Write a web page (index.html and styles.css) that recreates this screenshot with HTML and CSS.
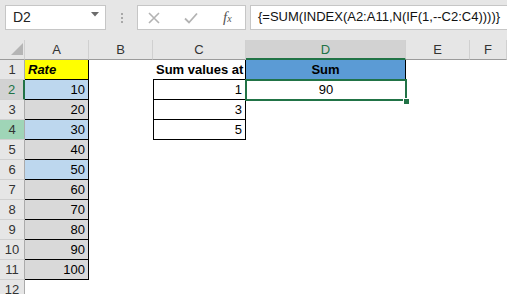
FILE: index.html
```html
<!DOCTYPE html>
<html>
<head>
    <meta charset="utf-8">
    <title>Sum values at</title>
    <link rel="stylesheet" href="styles.css">
</head>
<body>
    <div class="ribbon">
        <div class="name-box">
            <span>D2</span>
            <svg class="drop" width="8" height="5" viewBox="0 0 8 5"><path d="M0 0H8L4 4.5Z" fill="#6b6b6b"/></svg>
        </div>
        <div class="grip"><i></i><i></i><i></i></div>
        <div class="fx-buttons">
            <svg width="12" height="12" viewBox="0 0 12 12"><path d="M1 1L11 11M11 1L1 11" stroke="#b3b3b3" stroke-width="1.6"/></svg>
            <svg width="14" height="12" viewBox="0 0 14 12"><path d="M1 6.5L5 10.5L13 1.5" stroke="#b3b3b3" stroke-width="1.8" fill="none"/></svg>
            <span class="fx">f<sub>x</sub></span>
        </div>
        <div class="formula">{=SUM(INDEX(A2:A11,N(IF(1,--C2:C4))))}</div>
    </div>

    <div class="sheet">
        <!-- column headers -->
        <div class="corner"><svg width="25" height="20" viewBox="0 0 25 20"><path d="M11 15H23V3Z" fill="#b5b5b5"/></svg></div>
        <div class="ch">A</div>
        <div class="ch">B</div>
        <div class="ch">C</div>
        <div class="ch sel">D</div>
        <div class="ch">E</div>
        <div class="ch">F</div>

        <div class="rh">1</div>
        <div class="c a yellow"><b><i>Rate</i></b></div>
        <div class="c"></div>
        <div class="c c1"><b>Sum values at</b></div>
        <div class="c d1"><b>Sum</b></div>
        <div class="c"></div>
        <div class="c"></div>

        <div class="rh sel">2</div>
        <div class="c a blue">10</div>
        <div class="c"></div>
        <div class="c cv">1</div>
        <div class="c active">90</div>
        <div class="c"></div>
        <div class="c"></div>

        <div class="rh">3</div>
        <div class="c a grey">20</div>
        <div class="c"></div>
        <div class="c cv">3</div>
        <div class="c"></div>
        <div class="c"></div>
        <div class="c"></div>

        <div class="rh hl">4</div>
        <div class="c a blue">30</div>
        <div class="c"></div>
        <div class="c cv">5</div>
        <div class="c"></div>
        <div class="c"></div>
        <div class="c"></div>

        <div class="rh">5</div>
        <div class="c a grey">40</div>
        <div class="c"></div><div class="c"></div><div class="c"></div><div class="c"></div><div class="c"></div>

        <div class="rh">6</div>
        <div class="c a blue">50</div>
        <div class="c"></div><div class="c"></div><div class="c"></div><div class="c"></div><div class="c"></div>

        <div class="rh">7</div>
        <div class="c a grey">60</div>
        <div class="c"></div><div class="c"></div><div class="c"></div><div class="c"></div><div class="c"></div>

        <div class="rh">8</div>
        <div class="c a grey">70</div>
        <div class="c"></div><div class="c"></div><div class="c"></div><div class="c"></div><div class="c"></div>

        <div class="rh">9</div>
        <div class="c a grey">80</div>
        <div class="c"></div><div class="c"></div><div class="c"></div><div class="c"></div><div class="c"></div>

        <div class="rh">10</div>
        <div class="c a grey">90</div>
        <div class="c"></div><div class="c"></div><div class="c"></div><div class="c"></div><div class="c"></div>

        <div class="rh">11</div>
        <div class="c a grey">100</div>
        <div class="c"></div><div class="c"></div><div class="c"></div><div class="c"></div><div class="c"></div>

        <div class="rh">12</div>
        <div class="c"></div><div class="c"></div><div class="c"></div><div class="c"></div><div class="c"></div><div class="c"></div>
    </div>
</body>
</html>
```

FILE: styles.css
```css
body {
    margin: 0;
    width: 507px;
    height: 294px;
    overflow: hidden;
    background-color: #fff;
    font-family: "Liberation Sans", Arial, sans-serif;
    font-size: 13px;
    color: #000;
}

/* formula bar */
.ribbon {
    height: 40px;
    background-color: #e6e6e6;
    display: flex;
    align-items: flex-start;
    padding-top: 5px;
    box-sizing: border-box;
}
.name-box {
    margin-left: 5px;
    width: 101px;
    height: 25px;
    box-sizing: border-box;
    background-color: #fff;
    border: 1px solid #c6c6c6;
    display: flex;
    align-items: center;
    justify-content: space-between;
    padding: 0 6px 2px 7px;
    font-size: 14px;
    color: #222;
}
.name-box .drop {
    margin-top: -4px;
}
.grip {
    width: 31px;
    height: 25px;
    display: flex;
    flex-direction: column;
    align-items: center;
    justify-content: center;
    gap: 2px;
}
.grip i {
    width: 2px;
    height: 2px;
    background-color: #a8a8a8;
}
.fx-buttons {
    width: 109px;
    height: 25px;
    box-sizing: border-box;
    background-color: #fff;
    border: 1px solid #c6c6c6;
    display: flex;
    align-items: center;
    padding-left: 10px;
    gap: 24px;
}
.fx {
    font-family: "Liberation Serif", serif;
    font-style: italic;
    font-size: 15px;
    color: #555;
    margin-left: 1px;
}
.fx sub {
    font-size: 10px;
    vertical-align: 0;
}
.formula {
    flex: 1;
    margin-left: 4px;
    height: 25px;
    box-sizing: border-box;
    background-color: #fff;
    border: 1px solid #c6c6c6;
    border-right: none;
    padding: 3px 0 0 7px;
    font-size: 13px;
    color: #111;
    white-space: nowrap;
}

/* grid */
.sheet {
    display: grid;
    grid-template-columns: 25px 64px 64px 93px 160px 64px 1fr;
    grid-auto-rows: 20px;
}
.corner {
    background-color: #e6e6e6;
    border-right: 1px solid #d0d0d0;
    border-bottom: 1px solid #9b9b9b;
    box-sizing: border-box;
}
.corner svg {
    display: block;
}
.ch {
    background-color: #e6e6e6;
    border-right: 1px solid #d0d0d0;
    border-bottom: 1px solid #9b9b9b;
    box-sizing: border-box;
    text-align: center;
    line-height: 19px;
    color: #333;
    font-size: 13px;
}
.ch.sel {
    background-color: #d2d2d2;
    color: #217346;
    border-bottom: 2px solid #217346;
}
.rh {
    background-color: #e6e6e6;
    border-right: 1px solid #ababab;
    border-bottom: 1px solid #d0d0d0;
    box-sizing: border-box;
    text-align: center;
    line-height: 20px;
    color: #333;
    font-size: 13px;
}
.rh.sel {
    background-color: #d2d2d2;
    color: #217346;
    border-right: 2px solid #217346;
}
.rh.hl {
    background-color: #9fd5b7;
}
.c {
    box-sizing: border-box;
    line-height: 20px;
    padding: 0 3px;
    white-space: nowrap;
    font-size: 13px;
}
.c.a {
    text-align: right;
    border-right: 1px solid #000;
    border-bottom: 1px solid #000;
    line-height: 19px;
}
.yellow {
    background-color: #ffff00;
    text-align: left !important;
}
.blue {
    background-color: #bdd7ee;
}
.grey {
    background-color: #d9d9d9;
}
.c1 {
    border-right: 1px solid #000;
    border-bottom: 1px solid #000;
    line-height: 19px;
    padding-left: 3px;
}
.cv {
    text-align: right;
    border-left: 1px solid #000;
    border-right: 1px solid #000;
    border-bottom: 1px solid #000;
    line-height: 19px;
}
.d1 {
    background-color: #5b9bd5;
    border-right: 1px solid #000;
    text-align: center;
    line-height: 19px;
}
.active {
    position: relative;
    text-align: center;
}
.active::before {
    content: "";
    position: absolute;
    top: -1px;
    left: -1px;
    right: -1px;
    bottom: -1px;
    border: 2px solid #217346;
}
.active::after {
    content: "";
    position: absolute;
    right: -3px;
    bottom: -4px;
    width: 6px;
    height: 6px;
    background-color: #217346;
    border: 1px solid #fff;
    border-right: none;
    border-bottom: none;
    box-sizing: border-box;
}
```
